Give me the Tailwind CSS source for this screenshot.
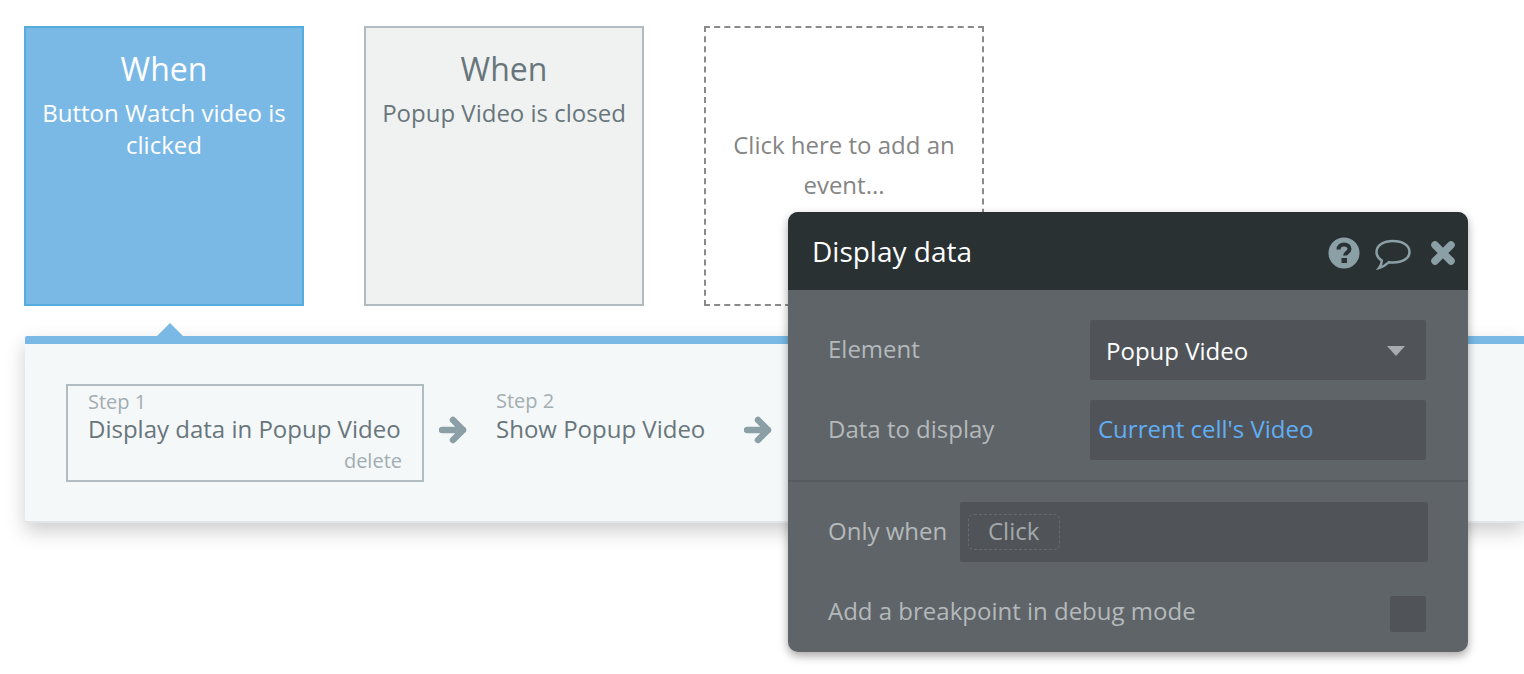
<!DOCTYPE html>
<html lang="en">
<head>
  <meta charset="UTF-8" />
  <title>Workflow</title>
  <script src="https://cdn.jsdelivr.net/npm/@tailwindcss/browser@4"></script>
</head>
<body class="bg-white h-[674px] overflow-hidden relative font-['Open_Sans',sans-serif] font-normal antialiased">
  <!-- Events -->
  <div class="flex gap-[60px] pl-6 pt-[26px]">
    <div class="w-[280px] h-[280px] border-2 border-[#55acdf] bg-[#7ab9e6] text-white text-center px-3 pt-5">
      <div class="text-[32px] leading-[42px]">When</div>
      <div class="text-[24px] leading-[32px] mt-[7px]">Button Watch video is clicked</div>
    </div>
    <div class="w-[280px] h-[280px] border-2 border-[#b1bcc1] bg-[#f0f2f1] text-[#68767c] text-center px-3 pt-5">
      <div class="text-[32px] leading-[42px]">When</div>
      <div class="text-[24px] leading-[32px] mt-[7px]">Popup Video is closed</div>
    </div>
    <div class="w-[280px] h-[280px] border-2 border-dashed border-[#8a8a8a] text-[#858585] text-center px-6 flex items-center justify-center pb-[2px]">
      <div class="text-[24px] leading-[40px]">Click here to add an event...</div>
    </div>
  </div>

  <!-- Steps panel -->
  <div class="relative ml-[25px] mt-[30px] h-[187px] border-t-8 border-b-2 border-t-[#7ab9e6] border-b-[#e3e5e6] bg-[#f5f8f9] rounded-tl-[2px] shadow-[0_8px_20px_rgba(0,0,0,0.2)]">
    <div class="absolute left-[131px] top-[-21px] w-0 h-0 border-x-[14px] border-x-transparent border-b-[14px] border-b-[#7ab9e6]"></div>
    <div class="flex items-start pl-[41px] pt-10">
      <div class="relative w-[358px] h-[98px] border-2 border-[#b1bcc1] pl-[20px] pt-[2px] text-[#68767c]">
        <div class="text-[20px] leading-[27px] text-[#a2adb1]">Step 1</div>
        <div class="text-[24px] leading-[27px]">Display data in Popup Video</div>
        <div class="absolute right-[20px] bottom-[5px] text-[20px] leading-[28px] text-[#a2adb1]">delete</div>
      </div>
      <svg class="w-7 h-7 mt-[32px] ml-[15px]" viewBox="0 0 28 28"><path d="M3 14H24M14 4L24 14L14 24" fill="none" stroke="#8b9fa6" stroke-width="6.5" stroke-linecap="round" stroke-linejoin="round"/></svg>
      <div class="ml-[29px] pt-[3px] w-[220px] text-[#68767c]">
        <div class="text-[20px] leading-[28px] text-[#a2adb1]">Step 2</div>
        <div class="text-[24px] leading-[27px] whitespace-nowrap">Show Popup Video</div>
      </div>
      <svg class="w-7 h-7 mt-[32px] ml-[28px]" viewBox="0 0 28 28"><path d="M3 14H24M14 4L24 14L14 24" fill="none" stroke="#8b9fa6" stroke-width="6.5" stroke-linecap="round" stroke-linejoin="round"/></svg>
    </div>
  </div>

  <!-- Property editor, floats over the panel -->
  <div class="absolute left-[788px] top-[212px] w-[680px] h-[440px] rounded-[10px] bg-[#5f6468] shadow-[0_4px_10px_rgba(0,0,0,0.35)] overflow-hidden">
    <div class="h-[78px] bg-[#2a3133] flex items-center pl-6 pr-[12px]">
      <div class="text-[28px] text-white flex-1">Display data</div>
      <svg class="w-8 h-8 mt-[3px] -ml-px" viewBox="0 0 32 32"><circle cx="16" cy="16" r="15.5" fill="#8b9fa6"/><path d="M10.5 12.5C10.5 9 13 7.5 16 7.5C19.5 7.5 21.5 9.5 21.5 12C21.5 15.5 17 15.5 17 18.5" fill="none" stroke="#2a3133" stroke-width="4"/><rect x="13.5" y="21" width="5.5" height="5" fill="#2a3133"/></svg>
      <svg class="w-9 h-8 ml-[15px] mt-[5px]" viewBox="0 0 36 32"><path d="M18 3C27.5 3 34.5 7.5 34.5 14C34.5 20.5 27.5 24.5 18 24.5C16.5 24.5 15 24.4 14 24.2C11 27 8 29 4 30C6 27.5 6.8 25 6.8 22.5C3.5 20.5 1.5 17.5 1.5 14C1.5 7.5 8.5 3 18 3Z" fill="none" stroke="#8b9fa6" stroke-width="2.5"/></svg>
      <svg class="w-[26px] h-[26px] ml-[19px] mt-[4px]" viewBox="0 0 26 26"><path d="M5 5L21 21M21 5L5 21" fill="none" stroke="#8b9fa6" stroke-width="7.5" stroke-linecap="round"/></svg>
    </div>
    <div class="pl-10 pr-[42px] pt-[30px] pb-5 border-b-2 border-[#565b5e]">
      <div class="flex items-center h-[60px]">
        <div class="w-[262px] text-[24px] text-[#b4b9bb] -mt-[3px]">Element</div>
        <div class="flex-1 h-[60px] bg-[#505458] rounded-[2px] flex items-center pl-4 pr-[21px] pt-[2px] text-[24px] text-white">
          <span class="flex-1">Popup Video</span>
          <span class="w-0 h-0 border-x-[9px] border-x-transparent border-t-[10px] border-t-[#a7acaf]"></span>
        </div>
      </div>
      <div class="flex items-center h-[60px] mt-5">
        <div class="w-[262px] text-[24px] text-[#b4b9bb] -mt-[2px]">Data to display</div>
        <div class="flex-1 h-[60px] bg-[#505458] rounded-[2px] flex items-center pl-2 pb-[2px] text-[24px] text-[#60aef5]">Current cell's Video</div>
      </div>
    </div>
    <div class="pl-10 pr-10 pt-5">
      <div class="flex items-center h-[60px]">
        <div class="w-[132px] text-[24px] text-[#b4b9bb] whitespace-nowrap -mt-[2px]">Only when</div>
        <div class="flex-1 h-[60px] bg-[#505458] rounded-[2px] flex items-center pl-[8px]">
          <span class="h-9 pl-[19px] pr-5 border border-dashed border-[#676c6f] rounded-md text-[24px] leading-[31px] text-[#a3a8ab]">Click</span>
        </div>
      </div>
      <div class="flex items-center justify-between h-9 mt-[34px] pr-[2px]">
        <div class="text-[24px] text-[#b4b9bb] -mt-[6px]">Add a breakpoint in debug mode</div>
        <div class="w-9 h-9 bg-[#505458] rounded-[2px]"></div>
      </div>
    </div>
  </div>
</body>
</html>
